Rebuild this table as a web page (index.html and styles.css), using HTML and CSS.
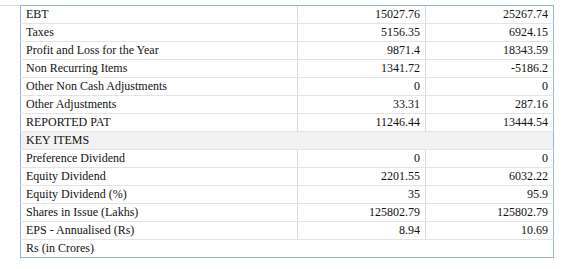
FILE: index.html
```html
<!DOCTYPE html>
<html>
<head>
<meta charset="utf-8">
<link rel="stylesheet" href="styles.css">
</head>
<body>
<div class="wrap">
  <div class="edge"></div>
  <table class="fin">
    <colgroup><col class="c-label"><col class="c-num"><col class="c-num"></colgroup>
    <tbody>
      <tr><td>EBT</td><td class="n">15027.76</td><td class="n">25267.74</td></tr>
      <tr><td>Taxes</td><td class="n">5156.35</td><td class="n">6924.15</td></tr>
      <tr><td>Profit and Loss for the Year</td><td class="n">9871.4</td><td class="n">18343.59</td></tr>
      <tr><td>Non Recurring Items</td><td class="n">1341.72</td><td class="n">-5186.2</td></tr>
      <tr><td>Other Non Cash Adjustments</td><td class="n">0</td><td class="n">0</td></tr>
      <tr><td>Other Adjustments</td><td class="n">33.31</td><td class="n">287.16</td></tr>
      <tr><td>REPORTED PAT</td><td class="n">11246.44</td><td class="n">13444.54</td></tr>
      <tr class="sec"><td colspan="3">KEY ITEMS</td></tr>
      <tr><td>Preference Dividend</td><td class="n">0</td><td class="n">0</td></tr>
      <tr><td>Equity Dividend</td><td class="n">2201.55</td><td class="n">6032.22</td></tr>
      <tr><td>Equity Dividend (%)</td><td class="n">35</td><td class="n">95.9</td></tr>
      <tr><td>Shares in Issue (Lakhs)</td><td class="n">125802.79</td><td class="n">125802.79</td></tr>
      <tr><td>EPS - Annualised (Rs)</td><td class="n">8.94</td><td class="n">10.69</td></tr>
      <tr class="foot"><td colspan="3">Rs (in Crores)</td></tr>
    </tbody>
  </table>
</div>
</body>
</html>
```
FILE: styles.css
```css
html, body {
  margin: 0;
  padding: 0;
  background: #fff;
}
body {
  font-family: "Liberation Serif", "Times New Roman", serif;
  font-size: 12px;
  color: #111;
}
.wrap {
  display: flex;
  align-items: flex-start;
  padding-top: 5px;
}
.edge {
  width: 20px;
  height: 1px;
  background: #dcdcdc;
  flex: none;
}
.fin {
  border-collapse: collapse;
  width: 534px;
  table-layout: fixed;
  border: 1px solid #95b3dc;
}
.c-label { width: 277px; }
.c-num { width: 128px; }
.fin td {
  height: 17px;
  padding: 0 5px;
  border-top: 1px solid #e4e4e4;
  border-bottom: 1px solid #e4e4e4;
  line-height: 17px;
  white-space: nowrap;
  vertical-align: middle;
}
.fin td.n {
  text-align: right;
  border-left: 1px solid #dadada;
}
.fin tr:first-child td { border-top: 1px solid #95b3dc; }
.fin tr.sec td { background: #f2f2f2; }
.fin tr.foot td { border-bottom: 1px solid #95b3dc; }
```
